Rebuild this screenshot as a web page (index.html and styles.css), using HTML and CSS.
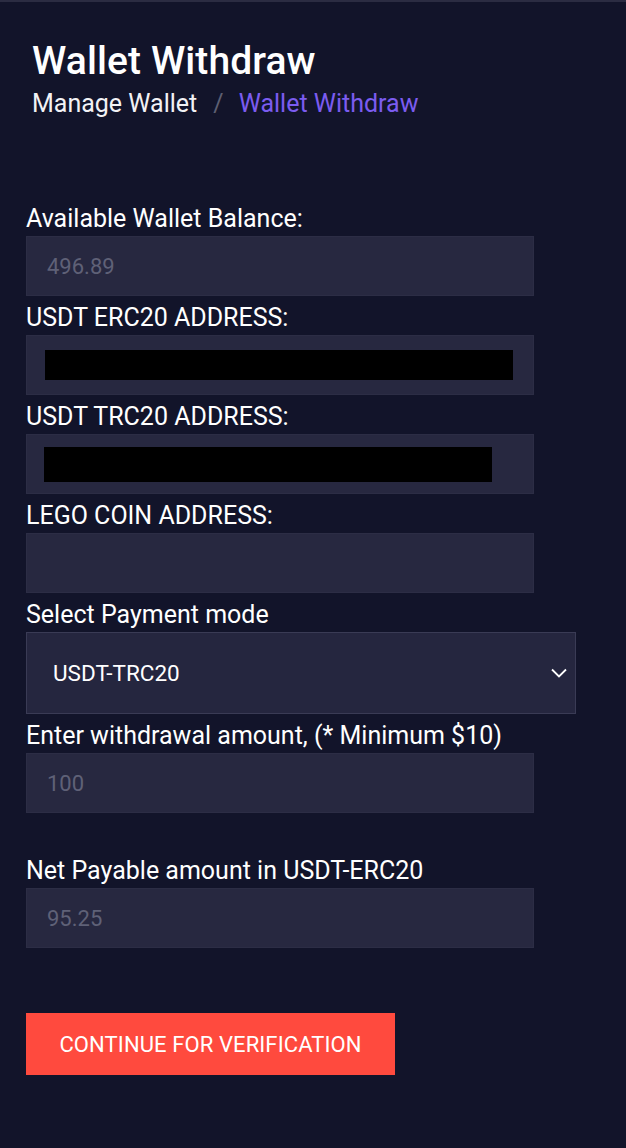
FILE: index.html
```html
<!DOCTYPE html>
<html lang="en">
<head>
<meta charset="utf-8">
<title>Wallet Withdraw</title>
<link rel="stylesheet" href="styles.css">
</head>
<body>
<div class="page">
  <header class="header">
    <h1 class="title">Wallet Withdraw</h1>
    <nav class="crumbs">
      <span class="crumb">Manage Wallet</span>
      <span class="sep">/</span>
      <span class="crumb active">Wallet Withdraw</span>
    </nav>
  </header>

  <form class="form">
    <div class="group">
      <label class="label">Available Wallet Balance:</label>
      <div class="field"><span class="value">496.89</span></div>
    </div>
    <div class="group">
      <label class="label">USDT ERC20 ADDRESS:</label>
      <div class="field"><span class="redact redact-erc"></span></div>
    </div>
    <div class="group">
      <label class="label">USDT TRC20 ADDRESS:</label>
      <div class="field"><span class="redact redact-trc"></span></div>
    </div>
    <div class="group">
      <label class="label">LEGO COIN ADDRESS:</label>
      <div class="field"></div>
    </div>
    <div class="group">
      <label class="label">Select Payment mode</label>
      <div class="select">
        <span class="select-text">USDT-TRC20</span>
        <svg class="chevron" width="16" height="10" viewBox="0 0 16 10"><path d="M1 1.5 L8 8.5 L15 1.5" fill="none" stroke="#ffffff" stroke-width="1.8"/></svg>
      </div>
    </div>
    <div class="group group-gap">
      <label class="label">Enter withdrawal amount, (* Minimum $10)</label>
      <div class="field"><span class="value">100</span></div>
    </div>
    <div class="group">
      <label class="label">Net Payable amount in USDT-ERC20</label>
      <div class="field"><span class="value">95.25</span></div>
    </div>
    <div class="actions">
      <button type="button" class="btn">CONTINUE FOR VERIFICATION</button>
    </div>
  </form>
</div>
</body>
</html>
```

FILE: styles.css
```css
* { box-sizing: border-box; }
html, body {
  margin: 0;
  padding: 0;
  background: #12142a;
}
body {
  font-family: Roboto, "Liberation Sans", sans-serif;
  color: #ffffff;
  min-height: 1148px;
}
.page {
  border-top: 2px solid #2b2c42;
  min-height: 1148px;
}
.header {
  padding: 36px 32px 0 32px;
}
.title {
  margin: 0;
  font-size: 39px;
  font-weight: 500;
  line-height: 46px;
  letter-spacing: 0.1px;
}
.crumbs {
  margin-top: 5px;
  display: flex;
  align-items: center;
  font-size: 25px;
  line-height: 30px;
}
.crumb { color: #f2f2f5; }
.sep {
  color: #5d5f72;
  margin: 0 15px 0 16px;
}
.crumb.active { color: #7b5cf0; }

.form {
  padding: 88px 26px 0 26px;
  display: flex;
  flex-direction: column;
}
.group {
  display: flex;
  flex-direction: column;
  gap: 5px;
  margin-bottom: 10px;
}
.group-gap { margin-bottom: 46px; }
.label {
  font-size: 25px;
  line-height: 24px;
  color: #ffffff;
}
.field {
  width: 508px;
  height: 60px;
  background: #272840;
  border: 1px solid #2c2d45;
  display: flex;
  align-items: center;
  padding-left: 20px;
}
.value {
  font-size: 22px;
  color: #5f6177;
}
.redact {
  display: block;
  background: #000000;
}
.redact-erc { width: 468px; height: 30px; margin-left: -2px; }
.redact-trc { width: 448px; height: 35px; margin-left: -3px; }
.select {
  width: 550px;
  height: 82px;
  background: #25263f;
  border: 1px solid #3a3b55;
  display: flex;
  align-items: center;
  justify-content: space-between;
  padding: 0 8px 0 26px;
}
.select-text {
  font-size: 22.5px;
  color: #ffffff;
}
.actions {
  margin-top: 55px;
}
.btn {
  width: 369px;
  height: 62px;
  background: #ff4a3e;
  border: none;
  color: #ffffff;
  font-family: Roboto, "Liberation Sans", sans-serif;
  font-size: 22px;
  letter-spacing: 0.1px;
  padding: 0;
}
```
